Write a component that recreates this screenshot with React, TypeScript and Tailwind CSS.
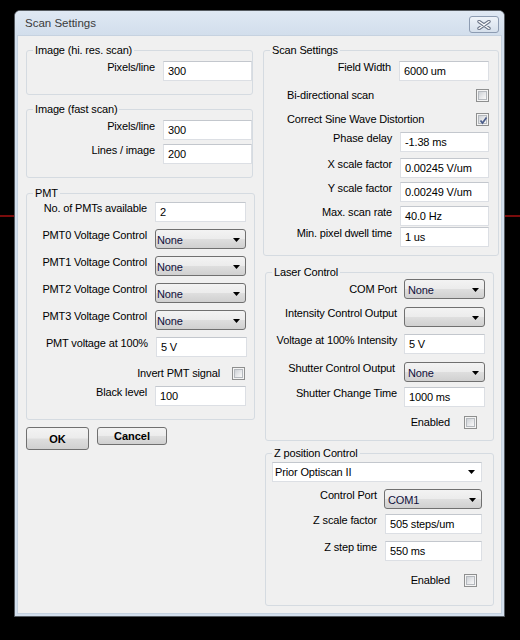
import React from "react";

function Input({ value, cls }: { value: string; cls: string }) {
  return (
    <div
      className={
        "h-[20px] shrink-0 border border-[#dcdfe4] border-t-[#c3c7cd] bg-white pl-[4px] flex items-center leading-[13px] " +
        cls
      }
    >
      {value}
    </div>
  );
}

function Arrow() {
  return (
    <svg width="7" height="4" viewBox="0 0 7 4" className="shrink-0">
      <polygon points="0,0 7,0 3.5,4" fill="#000" />
    </svg>
  );
}

function Select({ value, cls }: { value: string; cls: string }) {
  return (
    <div
      className={
        "h-[20px] shrink-0 rounded-[3px] border border-[#707070] bg-[linear-gradient(to_bottom,#f3f3f3_0%,#ececec_48%,#dedede_52%,#d0d0d0_100%)] flex items-center justify-between pr-[5px] pt-[2px] text-[#10103c] leading-[13px] " +
        cls
      }
    >
      <span>{value}</span>
      <Arrow />
    </div>
  );
}

function Check({ checked }: { checked?: boolean }) {
  return (
    <div className="w-[13px] h-[13px] shrink-0 border border-[#8e8f8f] bg-[#f4f4f4] p-[1px]">
      <div className="w-full h-full border border-[#b5b9be] bg-[linear-gradient(135deg,#cdd1d6_0%,#e9eaec_60%,#f8f8f8_100%)] relative">
        {checked && (
          <svg width="11" height="11" viewBox="0 0 11 11" className="absolute -left-[1px] -top-[1px]">
            <path d="M2.5 5.5 L4.5 8 L8.5 2.5" stroke="#4b5d8a" strokeWidth="1.7" fill="none" />
          </svg>
        )}
      </div>
    </div>
  );
}

function Box({
  title,
  cls,
  children,
}: {
  title: string;
  cls: string;
  children: React.ReactNode;
}) {
  return (
    <div className={"relative shrink-0 border border-[#d5dbe1] rounded-[3px] flex flex-col " + cls}>
      <span className="absolute -top-[7px] left-[6px] bg-[#f0f0f0] px-[2px] leading-[13px]">
        {title}
      </span>
      {children}
    </div>
  );
}

function Label({ text, cls }: { text: string; cls: string }) {
  return <div className={"leading-[13px] whitespace-nowrap " + cls}>{text}</div>;
}

export default function App() {
  return (
    <div className="w-[520px] h-[640px] bg-black relative overflow-hidden pt-[10px] pl-[14px] font-['Liberation_Sans',Arial,sans-serif] text-[11px] tracking-[-0.15px] text-black">
      <div className="absolute left-0 right-0 top-[215px] h-[2px] bg-[#7a0c0c]" />
      <div className="relative w-[491px] h-[607px] border border-[#555a60] rounded-t-[6px] bg-[#d3dfed] flex flex-col px-[2px] pb-[2px]">
        {/* title bar */}
        <div className="h-[24px] flex items-start justify-between bg-[linear-gradient(to_bottom,#dfe8f3,#d2deec)] -mx-[2px] px-[2px] rounded-t-[5px]">
          <div className="pl-[8px] pt-[5px] text-[11.5px] tracking-normal text-[#3b3b3b] leading-[14px]">
            Scan Settings
          </div>
          <div className="mt-[5px] mr-[3px] w-[30px] h-[17px] rounded-[3px] border border-[#8d9cb2] bg-[linear-gradient(to_bottom,#eef3f9,#d5dfeb)] flex items-center justify-center">
            <svg width="14" height="10" viewBox="0 0 14 10">
              <path d="M2 1.5 L12 8.5 M2 8.5 L12 1.5" stroke="#6c7689" strokeWidth="3.4" strokeLinecap="round" />
              <path d="M2 1.5 L12 8.5 M2 8.5 L12 1.5" stroke="#ffffff" strokeWidth="1.4" strokeLinecap="round" />
            </svg>
          </div>
        </div>
        {/* client */}
        <div className="flex-1 bg-[#f0f0f0] border border-[#c6d2e0] flex items-start pl-[8px] pt-[14px]">
          {/* left column */}
          <div className="w-[229px] shrink-0 flex flex-col">
            <Box title="Image (hi. res. scan)" cls="w-[227px] h-[45px] pt-[10px]">
              <div className="flex items-start gap-[8px]">
                <Label text="Pixels/line" cls="w-[128px] text-right" />
                <Input value="300" cls="w-[89px]" />
              </div>
            </Box>
            <Box title="Image (fast scan)" cls="w-[227px] h-[69px] mt-[14px] pt-[10px] gap-[4px]">
              <div className="flex items-start gap-[8px]">
                <Label text="Pixels/line" cls="w-[128px] text-right" />
                <Input value="300" cls="w-[89px]" />
              </div>
              <div className="flex items-start gap-[8px]">
                <Label text="Lines / image" cls="w-[128px] text-right" />
                <Input value="200" cls="w-[89px]" />
              </div>
            </Box>
            <Box title="PMT" cls="w-[229px] h-[227px] mt-[15px] pt-[8px] gap-[7px]">
              <div className="flex items-start gap-[8px]">
                <Label text="No. of PMTs available" cls="w-[120px] text-right" />
                <Input value="2" cls="w-[91px]" />
              </div>
              {["PMT0", "PMT1", "PMT2", "PMT3"].map((p) => (
                <div key={p} className="flex items-start gap-[8px]">
                  <Label text={p + " Voltage Control"} cls="w-[120px] text-right" />
                  <Select value="None" cls="w-[91px] pl-[1px]" />
                </div>
              ))}
              <div className="flex items-start gap-[8px]">
                <Label text="PMT voltage at 100%" cls="w-[121px] text-right" />
                <Input value="5 V" cls="w-[91px]" />
              </div>
              <div className="flex items-center justify-end gap-[12px] pr-[9px] mt-[3px]">
                <span className="leading-[13px]">Invert PMT signal</span>
                <Check />
              </div>
              <div className="flex items-start gap-[8px] -mt-[1px]">
                <Label text="Black level" cls="w-[120px] text-right" />
                <Input value="100" cls="w-[91px]" />
              </div>
            </Box>
            <div className="flex items-start gap-[8px] mt-[7px] font-bold tracking-normal">
              <div className="w-[63px] h-[23px] rounded-[3px] border border-[#707070] bg-[linear-gradient(to_bottom,#f3f3f3_0%,#ececec_48%,#dedede_52%,#d0d0d0_100%)] flex items-center justify-center pt-[1px]">
                OK
              </div>
              <div className="w-[70px] h-[18px] rounded-[3px] border border-[#707070] bg-[linear-gradient(to_bottom,#f3f3f3_0%,#ececec_48%,#dedede_52%,#d0d0d0_100%)] flex items-center justify-center">
                Cancel
              </div>
            </div>
          </div>
          {/* right column */}
          <div className="ml-[8px] w-[236px] shrink-0 flex flex-col">
            <Box title="Scan Settings" cls="w-[236px] h-[206px] pt-[10px] pr-[9px]">
              <div className="flex items-start justify-end gap-[8px]">
                <Label text="Field Width" cls="" />
                <Input value="6000 um" cls="w-[90px]" />
              </div>
              <div className="flex items-center justify-between pl-[23px] mt-[8px]">
                <span className="leading-[13px]">Bi-directional scan</span>
                <Check />
              </div>
              <div className="flex items-center justify-between pl-[23px] mt-[11px]">
                <span className="leading-[13px]">Correct Sine Wave Distortion</span>
                <Check checked />
              </div>
              <div className="flex items-start justify-end gap-[8px] mt-[6px]">
                <Label text="Phase delay" cls="" />
                <Input value="-1.38 ms" cls="w-[89px]" />
              </div>
              <div className="flex items-start justify-end gap-[8px] mt-[6px]">
                <Label text="X scale factor" cls="" />
                <Input value="0.00245 V/um" cls="w-[89px]" />
              </div>
              <div className="flex items-start justify-end gap-[8px] mt-[4px]">
                <Label text="Y scale factor" cls="" />
                <Input value="0.00249 V/um" cls="w-[89px]" />
              </div>
              <div className="flex items-start justify-end gap-[8px] mt-[4px]">
                <Label text="Max. scan rate" cls="" />
                <Input value="40.0 Hz" cls="w-[89px]" />
              </div>
              <div className="flex items-start justify-end gap-[8px] mt-[1px]">
                <Label text="Min. pixel dwell time" cls="" />
                <Input value="1 us" cls="w-[89px]" />
              </div>
            </Box>
            <Box title="Laser Control" cls="ml-[2px] w-[229px] h-[169px] mt-[16px] pt-[6px] pr-[8px]">
              <div className="flex items-start justify-end gap-[7px]">
                <Label text="COM Port" cls="pt-[4px]" />
                <Select value="None" cls="w-[81px] pl-[3px]" />
              </div>
              <div className="flex items-start justify-end gap-[7px] mt-[8px]">
                <Label text="Intensity Control Output" cls="" />
                <Select value="" cls="w-[81px] pl-[3px]" />
              </div>
              <div className="flex items-start justify-end gap-[7px] mt-[7px]">
                <Label text="Voltage at 100% Intensity" cls="" />
                <Input value="5 V" cls="w-[81px]" />
              </div>
              <div className="flex items-start justify-end gap-[9px] mt-[8px]">
                <Label text="Shutter Control Output" cls="" />
                <Select value="None" cls="w-[81px] pl-[3px]" />
              </div>
              <div className="flex items-start justify-end gap-[7px] mt-[5px]">
                <Label text="Shutter Change Time" cls="" />
                <Input value="1000 ms" cls="w-[81px]" />
              </div>
              <div className="flex items-center justify-end gap-[14px] mt-[9px] pr-[8px]">
                <span className="leading-[13px]">Enabled</span>
                <Check />
              </div>
            </Box>
            <Box title="Z position Control" cls="ml-[2px] w-[229px] h-[153px] mt-[12px] pt-[8px] pl-[6px] pr-[11px]">
              <div className="h-[20px] border border-[#dcdfe4] border-t-[#c3c7cd] bg-white flex items-center justify-between pl-[2px] pr-[6px] leading-[13px]">
                <span>Prior Optiscan II</span>
                <Arrow />
              </div>
              <div className="flex items-start justify-end gap-[7px] mt-[7px]">
                <Label text="Control Port" cls="" />
                <Select value="COM1" cls="w-[98px] pl-[3px]" />
              </div>
              <div className="flex items-start justify-end gap-[8px] mt-[5px]">
                <Label text="Z scale factor" cls="" />
                <Input value="505 steps/um" cls="w-[97px]" />
              </div>
              <div className="flex items-start justify-end gap-[8px] mt-[7px]">
                <Label text="Z step time" cls="" />
                <Input value="550 ms" cls="w-[97px]" />
              </div>
              <div className="flex items-center justify-end gap-[14px] mt-[13px] pr-[5px]">
                <span className="leading-[13px]">Enabled</span>
                <Check />
              </div>
            </Box>
          </div>
        </div>
      </div>
    </div>
  );
}
